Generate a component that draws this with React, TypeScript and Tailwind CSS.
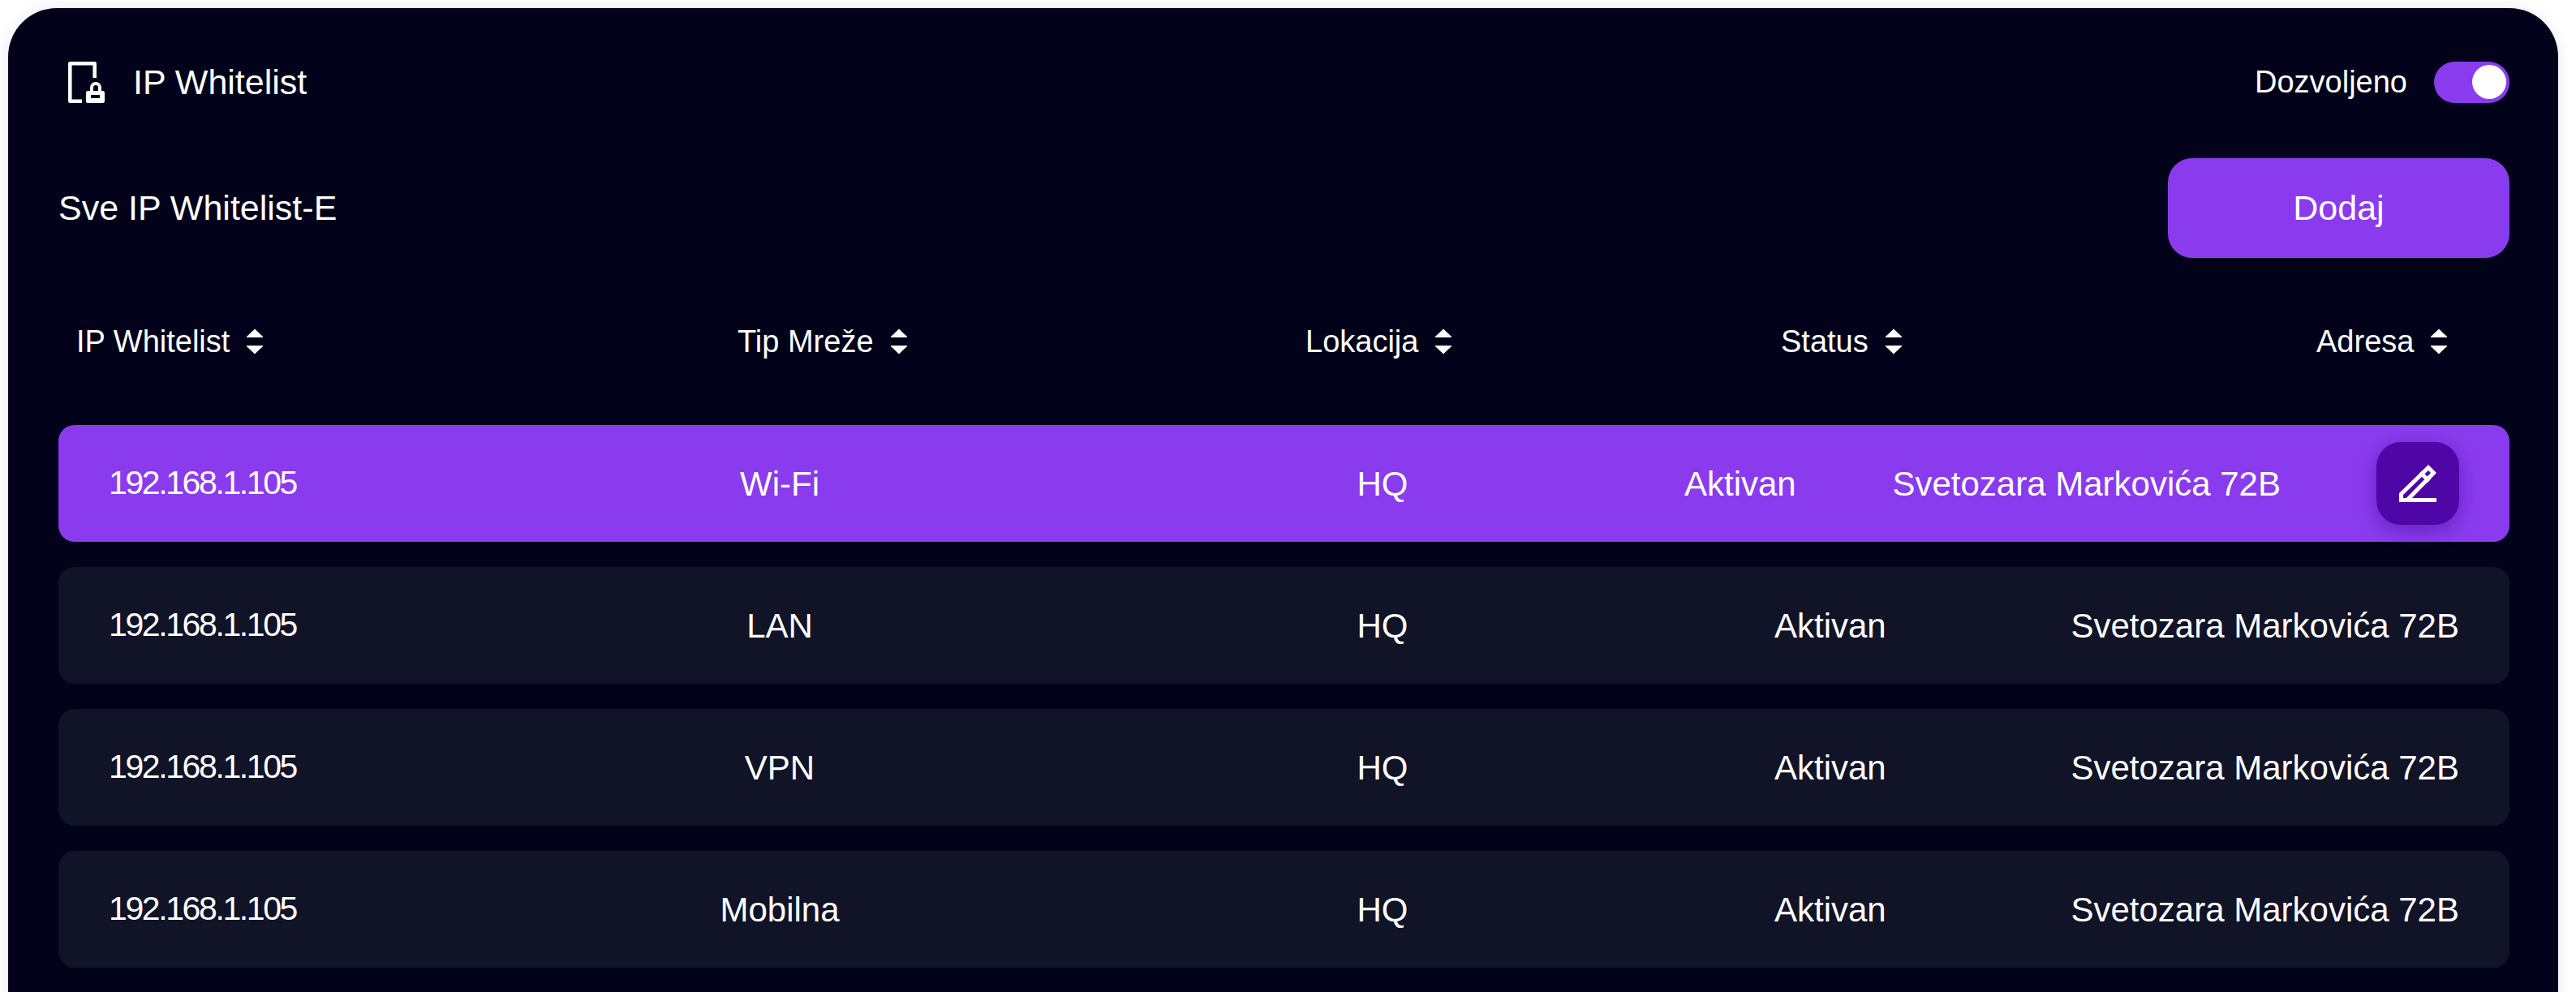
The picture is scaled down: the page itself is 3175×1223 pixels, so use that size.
const rows = ['Wi-Fi', 'LAN', 'VPN', 'Mobilna'];

function SortIcon() {
  return (
    <svg width="22" height="32" viewBox="0 0 22 32" fill="white" stroke="white" strokeWidth="1" strokeLinejoin="round">
      <path d="M11 1 L21 10.5 H1 Z" />
      <path d="M11 31 L21 21.5 H1 Z" />
    </svg>
  );
}

function PhoneLock() {
  return (
    <svg width="45" height="51" viewBox="0 0 45 51" fill="none" stroke="white" strokeWidth="4.5">
      <path d="M17 48.7 H2.3 V2.3 H32.7 V20" strokeLinejoin="round" />
      <path d="M29 38 V32 a5 5 0 0 1 10 0 V38" strokeWidth="4" />
      <rect x="22" y="36" width="23" height="15" rx="2.5" fill="white" stroke="none" />
      <rect x="28" y="41" width="11" height="4" fill="#02031a" stroke="none" />
    </svg>
  );
}

function EditIcon() {
  return (
    <svg width="46" height="46" viewBox="0 0 46 46" fill="none" stroke="white" strokeWidth="5">
      <path d="M0 43.5 H46" />
      <path d="M2.5 43.5 V36 L36 3.5 L42.5 10 L10 43.5" />
      <path d="M26 9.5 L37 20" />
    </svg>
  );
}

function Header({ label, className }: { label: string; className: string }) {
  return (
    <div className={`flex items-center gap-[20px] ${className}`}>
      <span>{label}</span>
      <SortIcon />
    </div>
  );
}

export default function App() {
  return (
    <div className="h-[1223px] w-[3175px] overflow-hidden bg-white pl-[10px] pt-[10px] font-['Liberation_Sans',sans-serif] text-white">
      <div className="h-[1300px] w-[3143px] rounded-[60px] bg-[#02031a] pl-[62px] pr-[60px] shadow-[0_0_20px_rgba(0,0,0,0.08)]">
        <div className="flex h-[185px] items-center justify-between pb-[3px] pl-[12px]">
          <div className="flex items-center gap-[35px]">
            <PhoneLock />
            <span className="text-[43px]">IP Whitelist</span>
          </div>
          <div className="flex items-center gap-[33px]">
            <span className="text-[38px]">Dozvoljeno</span>
            <div className="flex h-[51px] w-[93px] items-center justify-end rounded-full bg-[#8a3bee] pr-[4px]">
              <div className="h-[42px] w-[42px] rounded-full bg-white" />
            </div>
          </div>
        </div>
        <div className="flex h-[123px] items-center justify-between">
          <span className="text-[43px]">Sve IP Whitelist-E</span>
          <button className="flex h-[123px] w-[421px] items-center justify-center rounded-[30px] bg-[#8a3bee] text-[43px]">Dodaj</button>
        </div>
        <div className="flex h-[206px] items-center text-[38px]">
          <Header label="IP Whitelist" className="ml-[22px] w-[815px]" />
          <Header label="Tip Mreže" className="w-[700px]" />
          <Header label="Lokacija" className="w-[586px]" />
          <Header label="Status" className="w-[660px]" />
          <Header label="Adresa" className="" />
        </div>
        <div className="flex flex-col gap-[31px] text-[42px]">
          {rows.map((net, i) => (
            <div key={net} className={`flex h-[144px] items-center rounded-[20px] px-[62px] ${i === 0 ? 'bg-[#8a3bee]' : 'bg-[#111327]'}`}>
              <span className="w-[700px] text-[41px] tracking-[-2.4px]">192.168.1.105</span>
              <span className="ml-[27px] w-[200px] text-center">{net}</span>
              <span className="ml-[543px] w-[200px] text-center">HQ</span>
              <span className={i === 0 ? 'ml-[272px]' : 'ml-[383px]'}>Aktivan</span>
              <span className="ml-auto">Svetozara Markovića 72B</span>
              {i === 0 && (
                <button className="ml-[118px] flex h-[102px] w-[102px] items-center justify-center rounded-[30px] bg-[#4f06a6] shadow-[0_6px_24px_rgba(60,0,130,0.45)]">
                  <EditIcon />
                </button>
              )}
            </div>
          ))}
        </div>
      </div>
    </div>
  );
}
